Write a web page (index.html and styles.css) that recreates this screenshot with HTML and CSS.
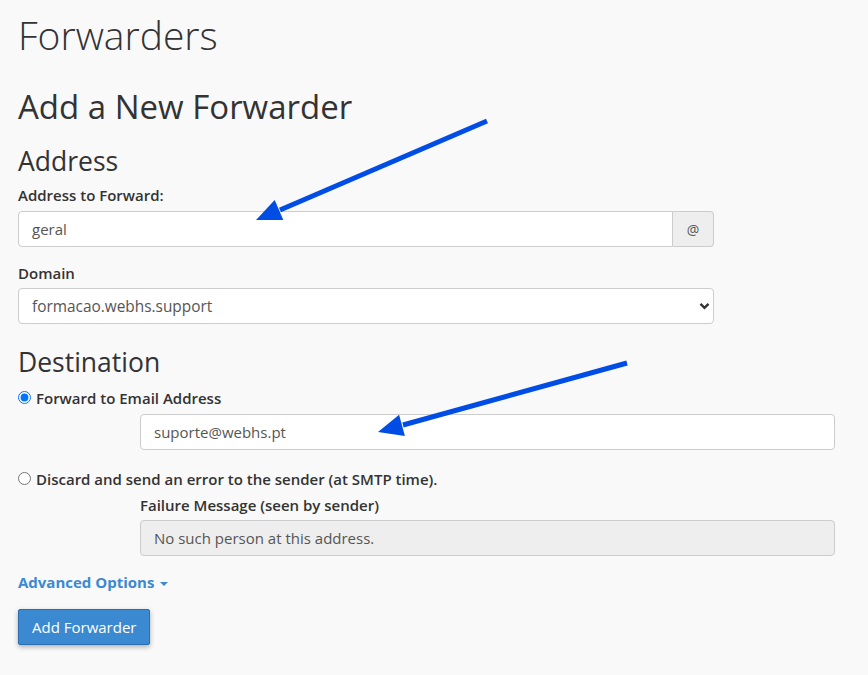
FILE: index.html
```html
<!DOCTYPE html>
<html lang="en">
<head>
<meta charset="utf-8">
<title>Forwarders</title>
<link rel="stylesheet" href="styles.css">
</head>
<body>
<div class="page">
  <h1 class="title">Forwarders</h1>
  <h2 class="subtitle">Add a New Forwarder</h2>

  <h3 class="section">Address</h3>
  <label class="label" for="addr">Address to Forward:</label>
  <div class="input-group">
    <input id="addr" class="field" type="text" value="geral">
    <span class="addon">@</span>
  </div>

  <label class="label label-domain" for="domain">Domain</label>
  <div class="select-wrap">
    <select id="domain" class="select">
      <option>formacao.webhs.support</option>
    </select>
    <svg class="chevron" width="11" height="8" viewBox="0 0 11 8"><path d="M1.5 1.8 L5.5 5.8 L9.5 1.8" fill="none" stroke="#333" stroke-width="2.4"/></svg>
  </div>

  <h3 class="section section-dest">Destination</h3>
  <label class="radio-row">
    <input type="radio" name="dest" class="radio" checked>
    <span>Forward to Email Address</span>
  </label>
  <div class="indent">
    <input class="field" type="text" value="suporte@webhs.pt">
  </div>

  <label class="radio-row radio-row-2">
    <input type="radio" name="dest" class="radio">
    <span>Discard and send an error to the sender (at SMTP time).</span>
  </label>
  <div class="indent">
    <div class="label label-fail">Failure Message (seen by sender)</div>
    <input class="field field-disabled" type="text" value="No such person at this address." disabled>
  </div>

  <a class="advanced" href="#">Advanced Options <span class="caret"></span></a>

  <div class="actions">
    <button class="btn" type="button">Add Forwarder</button>
  </div>
</div>

<svg class="arrows" width="868" height="675" viewBox="0 0 868 675">
  <line x1="487" y1="121" x2="280" y2="210" stroke="#004de6" stroke-width="5"/>
  <polygon points="256,220 274.7,199.9 283.3,220.1" fill="#004de6"/>
  <line x1="627" y1="363" x2="403" y2="425" stroke="#004de6" stroke-width="5"/>
  <polygon points="378,432 399.1,414.7 404.9,435.9" fill="#004de6"/>
</svg>
</body>
</html>
```

FILE: styles.css
```css
* { box-sizing: border-box; }

html, body {
  margin: 0;
  padding: 0;
  background: #f9f9f9;
}

body {
  font-family: "Open Sans", "Liberation Sans", sans-serif;
  color: #333;
  width: 868px;
  height: 675px;
  overflow: hidden;
  position: relative;
}

.page {
  padding: 0 18px;
  width: 732px;
}

.title {
  margin: 10px 0 0;
  font-size: 39px;
  font-weight: 300;
  line-height: 50px;
  color: #333;
}

.subtitle {
  margin: 27px 0 0;
  font-size: 33px;
  font-weight: 400;
  line-height: 40px;
}

.section {
  margin: 17px 0 0;
  font-size: 26.5px;
  font-weight: 400;
  line-height: 34px;
}

.section-dest {
  margin-top: 21px;
}

.label {
  display: block;
  margin-top: 7px;
  font-size: 15px;
  font-weight: 600;
  line-height: 20px;
}

.label-domain {
  margin-top: 16px;
}

.input-group {
  display: flex;
  margin-top: 6px;
  width: 696px;
  height: 36px;
}

.field {
  display: block;
  width: 100%;
  height: 36px;
  padding: 0 13px;
  border: 1px solid #ccc;
  border-radius: 4px;
  background: #fff;
  font-family: "Open Sans", "Liberation Sans", sans-serif;
  font-size: 15px;
  color: #555;
  outline: none;
}

.input-group .field {
  flex: 1;
  border-radius: 4px 0 0 4px;
}

.addon {
  display: flex;
  align-items: center;
  justify-content: center;
  width: 41px;
  height: 36px;
  border: 1px solid #ccc;
  border-left: 0;
  border-radius: 0 4px 4px 0;
  background: #eee;
  font-size: 14px;
  color: #555;
}

.select-wrap {
  position: relative;
  margin-top: 5px;
  width: 696px;
  height: 36px;
}

.select {
  display: block;
  width: 100%;
  height: 36px;
  padding: 0 30px 0 13px;
  border: 1px solid #ccc;
  border-radius: 4px;
  background: #fff;
  font-family: "Open Sans", "Liberation Sans", sans-serif;
  font-size: 15.4px;
  color: #555;
  appearance: none;
  -webkit-appearance: none;
  outline: none;
}

.chevron {
  position: absolute;
  right: 4px;
  top: 14px;
  pointer-events: none;
}

.radio-row {
  display: flex;
  align-items: center;
  margin-top: 9px;
  height: 20px;
  font-size: 15px;
  font-weight: 600;
  line-height: 20px;
}

.radio-row-2 {
  margin-top: 19px;
}

.radio {
  width: 13px;
  height: 13px;
  margin: 0 5px 1px 0;
  flex: none;
}

.indent {
  margin-left: 122px;
  width: 695px;
  margin-top: 6px;
}

.label-fail {
  margin-top: 0;
}

.indent .field-disabled {
  margin-top: 5px;
  background: #eee;
  color: #555;
  cursor: not-allowed;
}

.advanced {
  display: inline-block;
  margin-top: 16px;
  font-size: 15px;
  font-weight: 700;
  line-height: 20px;
  color: #3b89d3;
  text-decoration: none;
}

.caret {
  display: inline-block;
  width: 0;
  height: 0;
  margin-left: 2px;
  vertical-align: middle;
  border-top: 4px solid #3b89d3;
  border-left: 4px solid transparent;
  border-right: 4px solid transparent;
}

.actions {
  margin-top: 16px;
}

.btn {
  display: block;
  height: 36px;
  padding: 0 13px;
  border: 1px solid #2c6fb0;
  border-radius: 2px;
  background: #3a89d1;
  color: #fff;
  font-family: "Open Sans", "Liberation Sans", sans-serif;
  font-size: 15px;
  box-shadow: 0 2px 5px rgba(0, 0, 0, 0.3);
}

.arrows {
  position: absolute;
  left: 0;
  top: 0;
  pointer-events: none;
}
```
